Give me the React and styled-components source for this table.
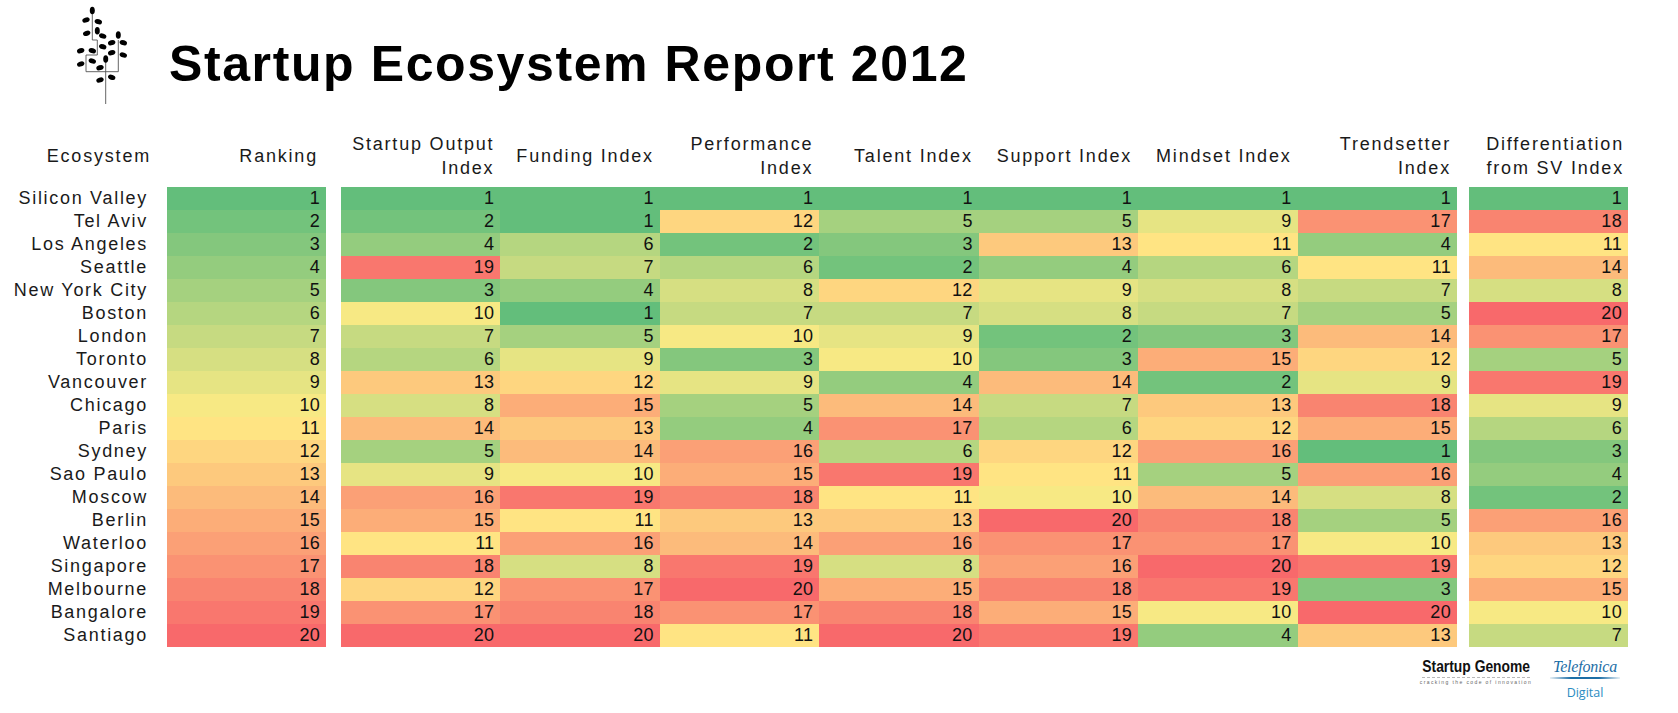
import React from "react";
import styled, { createGlobalStyle } from "styled-components";

const GlobalStyle = createGlobalStyle`
  html, body { margin: 0; padding: 0; background: #ffffff; }
  body { font-family: "Liberation Sans", Arial, sans-serif; color: #111; }
`;

const Page = styled.div`
  width: 1678px;
  height: 713px;
  background: #fff;
  overflow: hidden;
`;

const TopBar = styled.div`
  display: flex;
  align-items: flex-start;
  height: 110px;
  padding-left: 60px;
`;

const Logo = styled.svg`
  width: 80px;
  height: 110px;
  flex: none;
`;

const Title = styled.h1`
  margin: 39px 0 0 29px;
  font-family: "Liberation Sans", Arial, sans-serif;
  font-weight: 700;
  font-size: 50px;
  line-height: 50px;
  letter-spacing: 1.6px;
  color: #000;
`;

const Table = styled.div`
  display: flex;
  margin-top: 21px;
`;

const Group = styled.div`
  display: flex;
  margin-left: ${(p) => p.$gap || 0}px;
`;

const Column = styled.div`
  display: flex;
  flex-direction: column;
  width: ${(p) => p.$w}px;
  flex: none;
`;

const HeaderCell = styled.div`
  height: 50px;
  margin-bottom: 6px;
  display: flex;
  align-items: center;
  justify-content: flex-end;
  text-align: right;
  padding-right: ${(p) => p.$pad ?? 6}px;
  font-size: 18px;
  line-height: 24px;
  letter-spacing: 1.8px;
  color: #1a1a1a;
`;

const NameCell = styled.div`
  height: 23px;
  line-height: 23px;
  text-align: right;
  padding-right: 4px;
  font-size: 18px;
  letter-spacing: 1.7px;
  color: #1a1a1a;
  white-space: nowrap;
`;

const ValueCell = styled.div`
  height: 23px;
  line-height: 23px;
  text-align: right;
  padding-right: 6px;
  font-size: 18px;
  letter-spacing: 0.3px;
  color: #111;
  background: ${(p) => p.$bg};
`;

const Footer = styled.div`
  display: flex;
  justify-content: flex-end;
  align-items: flex-start;
  gap: 20px;
  padding-right: 58px;
  margin-top: 11px;
`;

const Genome = styled.div`
  display: flex;
  flex-direction: column;
  align-items: center;
  width: 108px;
`;

const GenomeName = styled.div`
  font-family: "Liberation Sans", Arial, sans-serif;
  font-weight: 700;
  font-size: 16.5px;
  line-height: 16px;
  color: #111;
  white-space: nowrap;
  transform: scaleX(0.84);
`;

const DashLine = styled.div`
  width: 100%;
  height: 0;
  margin-top: 3px;
  border-top: 1.5px dashed #b8b8b8;
`;

const Tagline = styled.div`
  margin-top: 1px;
  font-size: 5px;
  line-height: 6px;
  letter-spacing: 1.4px;
  color: #666;
  white-space: nowrap;
`;

const Telefonica = styled.div`
  display: flex;
  flex-direction: column;
  align-items: center;
  width: 70px;
`;

const TeleName = styled.div`
  font-family: "Liberation Serif", "Times New Roman", serif;
  font-style: italic;
  font-size: 16px;
  line-height: 17px;
  letter-spacing: -0.2px;
  color: #1c6ea6;
  white-space: nowrap;
`;

const TeleRule = styled.div`
  width: 100%;
  height: 1.5px;
  margin-top: 2px;
  background: linear-gradient(90deg, rgba(28,110,166,0.1), #1c6ea6 30%, #1c6ea6 70%, rgba(28,110,166,0.1));
`;

const TeleDigital = styled.div`
  margin-top: 7px;
  font-family: "Open Sans", "Noto Sans", sans-serif;
  font-size: 12.5px;
  line-height: 14px;
  color: #2a8cc2;
`;

const G = [99, 190, 123];
const Y = [255, 235, 132];
const R = [248, 105, 107];
const mix = (a, b, t) =>
  `rgb(${a.map((v, i) => Math.round(v + (b[i] - v) * t)).join(",")})`;
const scale = (v) => {
  const mid = 10.5;
  if (v <= mid) return mix(G, Y, (v - 1) / (mid - 1));
  return mix(Y, R, (v - mid) / (20 - mid));
};

const rows = [
  ["Silicon Valley", 1, [1, 1, 1, 1, 1, 1, 1], 1],
  ["Tel Aviv", 2, [2, 1, 12, 5, 5, 9, 17], 18],
  ["Los Angeles", 3, [4, 6, 2, 3, 13, 11, 4], 11],
  ["Seattle", 4, [19, 7, 6, 2, 4, 6, 11], 14],
  ["New York City", 5, [3, 4, 8, 12, 9, 8, 7], 8],
  ["Boston", 6, [10, 1, 7, 7, 8, 7, 5], 20],
  ["London", 7, [7, 5, 10, 9, 2, 3, 14], 17],
  ["Toronto", 8, [6, 9, 3, 10, 3, 15, 12], 5],
  ["Vancouver", 9, [13, 12, 9, 4, 14, 2, 9], 19],
  ["Chicago", 10, [8, 15, 5, 14, 7, 13, 18], 9],
  ["Paris", 11, [14, 13, 4, 17, 6, 12, 15], 6],
  ["Sydney", 12, [5, 14, 16, 6, 12, 16, 1], 3],
  ["Sao Paulo", 13, [9, 10, 15, 19, 11, 5, 16], 4],
  ["Moscow", 14, [16, 19, 18, 11, 10, 14, 8], 2],
  ["Berlin", 15, [15, 11, 13, 13, 20, 18, 5], 16],
  ["Waterloo", 16, [11, 16, 14, 16, 17, 17, 10], 13],
  ["Singapore", 17, [18, 8, 19, 8, 16, 20, 19], 12],
  ["Melbourne", 18, [12, 17, 20, 15, 18, 19, 3], 15],
  ["Bangalore", 19, [17, 18, 17, 18, 15, 10, 20], 10],
  ["Santiago", 20, [20, 20, 11, 20, 19, 4, 13], 7],
];

const indexHeaders = [
  ["Startup Output", "Index"],
  ["Funding Index"],
  ["Performance", "Index"],
  ["Talent Index"],
  ["Support Index"],
  ["Mindset Index"],
  ["Trendsetter", "Index"],
];

const HeaderText = ({ lines }) => (
  <span>
    {lines.map((l, i) => (
      <React.Fragment key={i}>
        {i > 0 && <br />}
        {l}
      </React.Fragment>
    ))}
  </span>
);

const leaves = [
  [32.3, 10.5, 90], [26, 20, -20], [38.3, 21.7, 20], [26.7, 33.3, -20],
  [37.3, 30.7, 90], [42.7, 36, 20], [58.3, 35, 90], [51.7, 42.7, -20],
  [63.3, 42.7, 20], [42.7, 46.7, 20], [20.7, 50.7, -20], [32.3, 50.7, 20],
  [51.7, 52.7, -20], [63.3, 55, 20], [20.7, 64, -20], [32.3, 61, 20],
  [45.7, 59, 90], [40, 67.7, -20], [40, 80, -20], [51.7, 77.3, 20],
];

const TreeLogo = () => (
  <Logo viewBox="0 0 80 110">
    <g stroke="#555" strokeWidth="0.9" fill="none">
      <path d="M45.7 58 V104" />
      <path d="M26 55 V71.7 H58.3 V40" />
      <path d="M32.3 14 V40 H37.3 V55 H26" />
    </g>
    <g fill="#000">
      {leaves.map(([x, y, r], i) => (
        <ellipse key={i} cx={x} cy={y} rx="3.8" ry="2.5" transform={`rotate(${r} ${x} ${y})`} />
      ))}
    </g>
  </Logo>
);

export default function App() {
  const COL = 159.43;
  return (
    <Page>
      <GlobalStyle />
      <TopBar>
        <TreeLogo />
        <Title>Startup Ecosystem Report 2012</Title>
      </TopBar>
      <Table>
        <Column $w={152}>
          <HeaderCell $pad={1}>Ecosystem</HeaderCell>
          {rows.map((r) => (
            <NameCell key={r[0]}>{r[0]}</NameCell>
          ))}
        </Column>
        <Group $gap={15}>
          <Column $w={159}>
            <HeaderCell $pad={8}>Ranking</HeaderCell>
            {rows.map((r) => (
              <ValueCell key={r[0]} $bg={scale(r[1])}>{r[1]}</ValueCell>
            ))}
          </Column>
        </Group>
        <Group $gap={15}>
          {indexHeaders.map((h, ci) => (
            <Column key={ci} $w={COL}>
              <HeaderCell>
                <HeaderText lines={h} />
              </HeaderCell>
              {rows.map((r) => (
                <ValueCell key={r[0]} $bg={scale(r[2][ci])}>{r[2][ci]}</ValueCell>
              ))}
            </Column>
          ))}
        </Group>
        <Group $gap={12}>
          <Column $w={159}>
            <HeaderCell $pad={4}>
              <HeaderText lines={["Differentiation", "from SV Index"]} />
            </HeaderCell>
            {rows.map((r) => (
              <ValueCell key={r[0]} $bg={scale(r[3])}>{r[3]}</ValueCell>
            ))}
          </Column>
        </Group>
      </Table>
      <Footer>
        <Genome>
          <GenomeName>Startup Genome</GenomeName>
          <DashLine />
          <Tagline>cracking the code of innovation</Tagline>
        </Genome>
        <Telefonica>
          <TeleName>Telefonica</TeleName>
          <TeleRule />
          <TeleDigital>Digital</TeleDigital>
        </Telefonica>
      </Footer>
    </Page>
  );
}
